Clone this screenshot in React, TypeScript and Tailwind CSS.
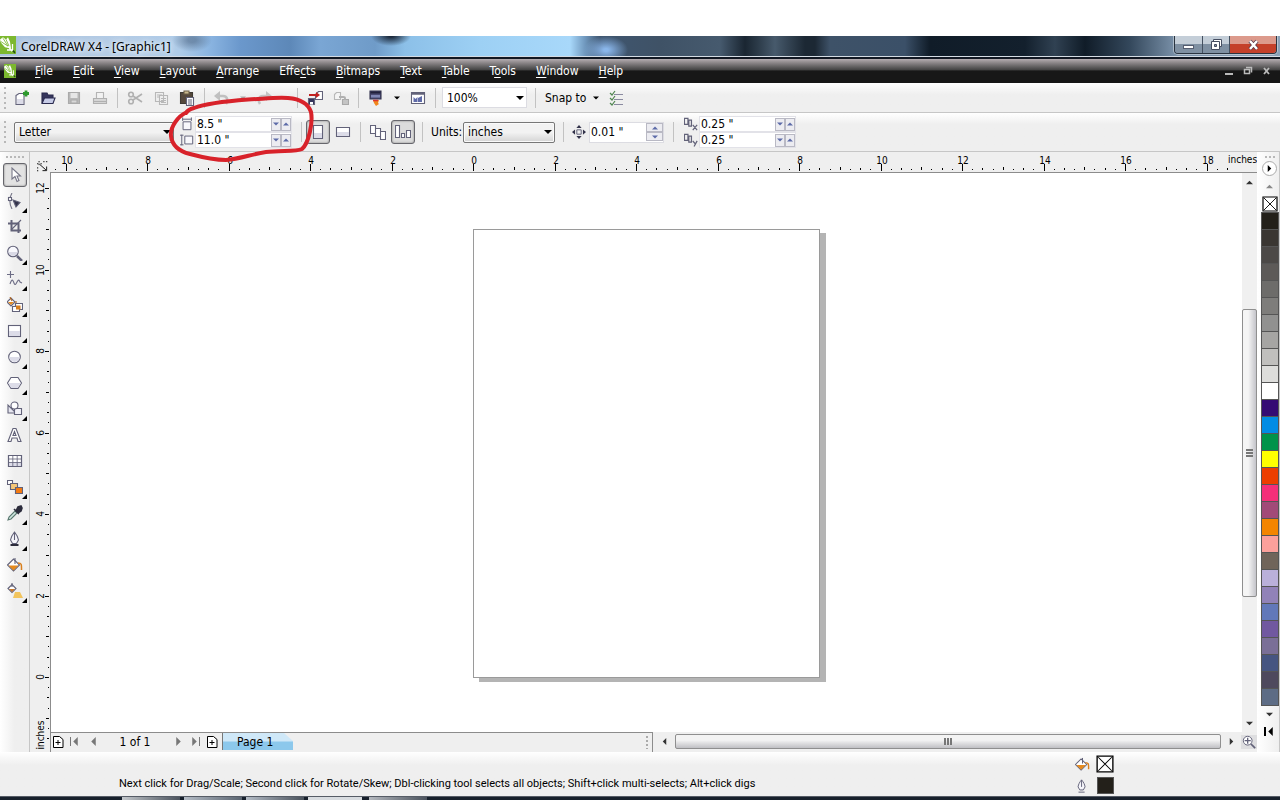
import React from "react";

const UNIT = 40.75;

function Arrow({ dir = "down", size = 7, color = "#000" }: { dir?: "up" | "down" | "left" | "right"; size?: number; color?: string }) {
  const paths = { down: "M0 2h8L4 6z", up: "M0 6h8L4 2z", left: "M6 0v8L2 4z", right: "M2 0v8l4-4z" };
  return (
    <svg width={size} height={size} viewBox="0 0 8 8" aria-hidden="true" className="pointer-events-none shrink-0">
      <path d={paths[dir]} fill={color} />
    </svg>
  );
}

function Icon({ children, size = 16 }: { children: React.ReactNode; size?: number }) {
  return (
    <svg width={size} height={size} viewBox="0 0 16 16" fill="none" stroke="#626279" strokeWidth="1.1" aria-hidden="true" className="shrink-0">
      {children}
    </svg>
  );
}

function Grip() {
  return <div className="h-6 w-[9px] shrink-0 bg-[radial-gradient(circle_at_5px_2px,#b8b8b8_1px,transparent_1px)] bg-[length:9px_5px]" />;
}

function Sep() {
  return (
    <div className="flex h-5 w-[9px] shrink-0 justify-center">
      <div className="w-px bg-[#c2c2c2]" />
    </div>
  );
}

function ToolButton({ label, children, wide = true }: { label: string; children: React.ReactNode; wide?: boolean }) {
  return (
    <button aria-label={label} className={`flex h-6 shrink-0 items-center justify-center ${wide ? "w-[26px]" : "w-4"}`}>
      {children}
    </button>
  );
}

function Select({ label, value, className, plain }: { label: string; value: string; className: string; plain?: boolean }) {
  return (
    <div className={`relative flex items-center ${className}`}>
      <select
        aria-label={label}
        defaultValue={value}
        className={`h-full w-full appearance-none pl-1 pr-5 text-xs text-black ${
          plain ? "border border-[#dcdce2] bg-white" : "rounded-[2px] border border-[#777] bg-linear-to-b from-[#f2f2f2] from-50% to-[#d4d4d4] shadow-[inset_0_0_0_1px_#fafafa]"
        }`}
      >
        <option>{value}</option>
      </select>
      <span className="pointer-events-none absolute right-[3px]">
        <Arrow size={8} />
      </span>
    </div>
  );
}

function SpinButton({ dir, label, className }: { dir: "up" | "down"; label: string; className: string }) {
  return (
    <button aria-label={label} className={`flex items-center justify-center border border-[#b9b9c4] bg-[#ececf1] ${className}`}>
      <Arrow dir={dir} size={6} color="#5c6aa8" />
    </button>
  );
}

function PairField({ label, value }: { label: string; value: string }) {
  return (
    <div className="flex h-4 w-[97px] items-center border border-[#e2e2e8] bg-white">
      <input aria-label={label} defaultValue={value} className="h-full min-w-0 flex-1 bg-transparent pl-px text-xs leading-none text-black" />
      <SpinButton dir="down" label={`Decrease ${label}`} className="h-[13px] w-[10px]" />
      <SpinButton dir="up" label={`Increase ${label}`} className="h-[13px] w-[10px]" />
    </div>
  );
}

function CorelMark({ width, height }: { width: number; height: number }) {
  return (
    <svg width={width} height={height} viewBox="0 0 16 16" preserveAspectRatio="none" aria-hidden="true" className="shrink-0">
      <rect width="16" height="16" fill="#7cb82f" />
      <path d="M0 3l3-2 3 2 2-2 2 4 1 6-6-1-4-4z" fill="#fff" />
      <path d="M3 2l5 7M6 3l3 6M1 5l7 4" stroke="#7cb82f" strokeWidth=".8" />
      <path d="M9 10l3 3.500M12.500 7v5.500H7" stroke="#fff" strokeWidth="1.300" fill="none" />
      <path d="M13 13l2 2" stroke="#234d12" strokeWidth="1.500" />
    </svg>
  );
}

const menus: [string, string, string][] = [
  ["", "F", "ile"],
  ["", "E", "dit"],
  ["", "V", "iew"],
  ["", "L", "ayout"],
  ["", "A", "rrange"],
  ["Effe", "c", "ts"],
  ["", "B", "itmaps"],
  ["", "T", "ext"],
  ["", "T", "able"],
  ["T", "o", "ols"],
  ["", "W", "indow"],
  ["", "H", "elp"],
];

function tickLength(q: number) {
  if (q % 8 === 0) return 7;
  if (q % 4 === 0) return 3;
  return q % 2 === 0 ? 2 : 1;
}

function HorizontalRuler() {
  const ticks = Array.from({ length: 118 }, (_, i) => i - 41);
  return (
    <svg height="20" className="block w-full" aria-hidden="true">
      {ticks.map((q) => {
        const x = Math.round(423 + (q * UNIT) / 4);
        const n = tickLength(q);
        return (
          <g key={q}>
            <rect x={x} y={n === 7 ? 12 : 18 - n} width="1" height={n} fill="#000" />
            {n === 7 && (
              <text x={x + 1} y="12" textAnchor="middle" className="text-[10px]">
                {Math.abs(q / 4)}
              </text>
            )}
          </g>
        );
      })}
    </svg>
  );
}

function VerticalRuler() {
  const ticks = Array.from({ length: 55 }, (_, i) => i - 6);
  return (
    <svg width="20" height="100%" className="block" aria-hidden="true">
      {ticks.map((q) => {
        const y = Math.round(505 - (q * UNIT) / 4);
        const n = tickLength(q) === 7 ? 5 : tickLength(q);
        return (
          <g key={q}>
            <rect x={n === 5 ? 15 : 19 - n} y={y} width={n === 5 ? 4 : n} height="1" fill="#000" />
            {n === 5 && (
              <text transform={`translate(14 ${y}) rotate(-90)`} textAnchor="middle" className="text-[10px]">
                {q / 4}
              </text>
            )}
          </g>
        );
      })}
      <text transform="translate(14 563) rotate(-90)" textAnchor="middle" className="text-[10px]">
        inches
      </text>
    </svg>
  );
}

const tools: { label: string; flyout: boolean; art: React.ReactNode }[] = [
  { label: "Pick", flyout: false, art: <path d="M5 1v11l3-2.500 2 5 2-1-2-4.500h3.500z" fill="#fff" stroke="#777788" /> },
  {
    label: "Shape",
    flyout: true,
    art: (
      <>
        <path d="M5 0c-3 5-3 10 0 16" stroke="#777788" />
        <rect x="1.500" y="4.500" width="3" height="3" fill="#fff" />
        <path d="M6 7l7 2.500-4 4.500z" fill="#33334a" />
      </>
    ),
  },
  {
    label: "Crop",
    flyout: true,
    art: (
      <>
        <path d="M4.500 1v10.500H14M1 4.500h10.500V14" strokeWidth="2" />
        <path d="M14 1L4 11" />
      </>
    ),
  },
  {
    label: "Zoom",
    flyout: true,
    art: (
      <>
        <path d="M10 11l5 5" strokeWidth="2.500" />
        <circle cx="6" cy="6.500" r="5.300" fill="#f8f8fd" />
        <path d="M1.500 7h9c-1 5-8 5-9 0z" fill="#d9d9e6" stroke="none" />
      </>
    ),
  },
  { label: "Freehand", flyout: true, art: <path d="M3.500 0v7M0 3.500h7M3 13c2-6 3-4 4-1s2 1 3-1 2-3 3 0l2 1" stroke="#6d6d86" /> },
  {
    label: "Smart fill",
    flyout: true,
    art: (
      <>
        <path d="M0 5l4-4 4 4-4 4z" fill="#fff" />
        <path d="M1 5h6L4 8z" fill="#e48a22" stroke="none" />
        <path d="M3 0l2 4M9 4v6" stroke="#b5661b" />
        <path d="M8.500 6.500h7v6h-7z" fill="#fff" />
        <path d="M5.500 9.500h7v5h-7z" fill="#fff" />
        <path d="M9 8.500h4.500v4H9z" fill="#d97f1c" stroke="none" />
      </>
    ),
  },
  {
    label: "Rectangle",
    flyout: true,
    art: (
      <>
        <rect x="1.500" y="2.500" width="12" height="11" fill="#fff" />
        <path d="M2 8h11v5H2z" fill="#dcdce8" stroke="none" />
      </>
    ),
  },
  {
    label: "Ellipse",
    flyout: true,
    art: (
      <>
        <circle cx="7.500" cy="8" r="5.800" fill="#fff" />
        <path d="M2.300 8h10.400c-.5 6.500-9.900 6.500-10.400 0z" fill="#dcdce8" stroke="none" />
      </>
    ),
  },
  {
    label: "Polygon",
    flyout: true,
    art: (
      <>
        <path d="M4 2.500h7L14.500 8 11 13.500H4L.5 8z" fill="#fff" />
        <path d="M1.200 8h12.600l-3 5H4.200z" fill="#dcdce8" stroke="none" />
      </>
    ),
  },
  {
    label: "Basic shapes",
    flyout: true,
    art: (
      <>
        <path d="M1 4v8h8z" fill="#e6e6f0" />
        <path d="M7.500 7.500h7v6h-7z" fill="#f2f2f8" />
        <circle cx="7.500" cy="4.500" r="3.500" fill="#fff" />
      </>
    ),
  },
  { label: "Text", flyout: false, art: <path d="M1 14.500L6 1.500h3l5 13h-3l-1-3.500H5l-1 3.500zM6 8.500h3L7.500 4.500z" fill="#fff" fillRule="evenodd" /> },
  {
    label: "Table",
    flyout: false,
    art: (
      <>
        <path d="M1.500 2.500h13v11h-13z" fill="#fff" />
        <path d="M2 9h12v4H2z" fill="#dcdce8" stroke="none" />
        <path d="M1.500 2.500h13v11h-13z" />
        <path d="M1 6h13M1 9.500h13M5.800 2.500v11M10.200 2.500v11" strokeWidth=".8" />
      </>
    ),
  },
  {
    label: "Blend",
    flyout: true,
    art: (
      <>
        <path d="M.5 1.500h5v4h-5z" fill="#fff" />
        <path d="M3.500 4.500h7v6h-7z" fill="#f6c878" />
        <path d="M8.500 8.500h7v6h-7z" fill="#f47a10" />
      </>
    ),
  },
  {
    label: "Eyedropper",
    flyout: true,
    art: (
      <>
        <path d="M1 15l1-3 6-6 2 2-6 6z" fill="#cfe6df" stroke="#58776f" />
        <path d="M7 4l5 5M9 6l2-4 3-1 1 2-1 3-3 2z" fill="#2c2c3c" stroke="#2c2c3c" strokeWidth="1.600" />
      </>
    ),
  },
  {
    label: "Outline",
    flyout: true,
    art: (
      <>
        <path d="M7.500 1C5 4 4 6 3.500 9l2 3.500h4l2-3.500C11 6 10 4 7.500 1zM7.500 1v8" fill="#f6f6fb" />
        <path d="M3.500 14h8" strokeWidth="2" stroke="#2c2c3c" />
      </>
    ),
  },
  {
    label: "Fill",
    flyout: true,
    art: (
      <>
        <path d="M.5 8l6-6 6 6-6 6z" fill="#fff" />
        <path d="M1.500 8.500h10l-5 5z" fill="#e58a1e" stroke="none" />
        <path d="M8 7V1" />
        <path d="M11 6c4 0 3.500 2 3.500 7" stroke="#d97f1c" strokeWidth="1.500" />
      </>
    ),
  },
  {
    label: "Interactive fill",
    flyout: true,
    art: (
      <>
        <path d="M1 5.500l4-4 4 4-4 4z" fill="#fff" />
        <path d="M2 6h6L5 9z" fill="#c87a2c" stroke="none" />
        <path d="M5 0v4" />
        <path d="M8 9h5l3 6H6z" fill="#f2c45c" stroke="none" />
      </>
    ),
  },
];

const swatches = [
  "#23201a", "#3a3632", "#4c4947", "#5d5a58", "#6d6c6a", "#7e7d7b", "#919190", "#a6a5a3", "#c0bfbd", "#dddddb", "#ffffff",
  "#350b74", "#018ce4", "#00934a", "#ffff00", "#ec3e00", "#f42f79", "#a24a78", "#f38500", "#fba09b", "#70645a", "#bab0da",
  "#9182b8", "#6278b9", "#7158a0", "#7a6f97", "#465581", "#4e495d", "#5d6c85",
];

function NoColor({ size }: { size: number }) {
  return (
    <svg width={size} height={size} viewBox="0 0 16 16" aria-hidden="true" className="shrink-0">
      <path d="M1 1h14v14H1z" fill="#fff" stroke="#000" strokeWidth="1.200" />
      <path d="M2 2l12 12M14 2L2 14" stroke="#000" strokeWidth=".9" />
    </svg>
  );
}

function AddPage() {
  return (
    <svg width="11" height="12" viewBox="0 0 11 12" aria-hidden="true">
      <path d="M.5.5h6l3.500 3v8H.5zM2.500 6.500h5M5 4v5" fill="#fff" stroke="#000" />
    </svg>
  );
}

export default function App() {
  return (
    <div className="relative flex h-screen min-h-[640px] flex-col overflow-hidden bg-white pt-9 font-['DejaVu_Sans_Condensed','Noto_Sans',sans-serif] text-xs text-black">
      <header className="flex h-[23px] shrink-0 items-start border-b-2 border-[#111722] bg-[radial-gradient(ellipse_20px_12px_at_192px_4px,#4f688699_20%,transparent),radial-gradient(ellipse_20px_10px_at_391px_0px,#1c2a3c_10%,transparent),radial-gradient(ellipse_22px_14px_at_606px_14px,#8ab6ea_10%,transparent),linear-gradient(90deg,#a9c2de_0px,#b4cce6_120px,#aecbe8_180px,#8cb6e2_208px,#6b98cc_240px,#5d88b8_290px,#7aa6d4_320px,#6f9bc8_375px,#8cc0e8_405px,#9dd0f4_480px,#a8d8fa_570px,#7098be_585px,#3f5670_600px,#3f5266_660px,#465a6e_720px,#1a2632_745px,#2c3b49_758px,#475a6c_775px,#1c2834_805px,#1c2834_815px,#3e5268_830px,#3b5068_905px,#101c28_930px,#13202d_1025px,#304152_1055px,#101c28_1085px,#34485c_1130px,#7990a8_1175px,#8ca2b8_100%)] shadow-[inset_0_-1px_0_#d4dce4]">
        <CorelMark width={16} height={18} />
        <h1 className="pl-[5px] pt-px font-['Noto_Sans',sans-serif] text-xs leading-[20px] [text-shadow:0_0_5px_#fff,0_0_8px_#fff]">CorelDRAW X4 - [Graphic1]</h1>
        <div className="ml-auto mr-[3px] flex h-[18px] overflow-hidden rounded-b-[4px] border border-t-0 border-[#2a3440] shadow-[0_0_0_1px_#ffffff66]">
          <button aria-label="Minimize" className="flex w-7 items-center justify-center border-r border-[#445060] bg-linear-to-b from-[#c4ced8] from-45% to-[#7f90a2] to-50%">
            <svg width="12" height="12" aria-hidden="true"><rect x=".5" y="6.500" width="10" height="3" fill="#fff" stroke="#555d70" /></svg>
          </button>
          <button aria-label="Restore" className="flex w-[27px] items-center justify-center border-r border-[#445060] bg-linear-to-b from-[#c4ced8] from-45% to-[#7f90a2] to-50%">
            <svg width="13" height="13" aria-hidden="true"><path d="M3.500 1.500h8v7h-8z" fill="#fff" stroke="#454d60" /><path d="M1.500 3.500h8v8h-8z" fill="#fff" stroke="#454d60" /><path d="M4.500 6.500h2v2h-2z" fill="#8994a6" stroke="#454d60" /></svg>
          </button>
          <button aria-label="Close" className="flex w-[46px] items-center justify-center bg-linear-to-b from-[#dc9a8c] from-45% to-[#c4402a] to-50%">
            <svg width="13" height="12" aria-hidden="true"><path d="M3 2l7 8M10 2l-7 8" stroke="#54384a" strokeWidth="4" /><path d="M3 2l7 8M10 2l-7 8" stroke="#fff" strokeWidth="2.500" /></svg>
          </button>
        </div>
      </header>

      <nav aria-label="Main menu" className="flex h-6 shrink-0 items-center bg-linear-to-b from-[#b5adb1] via-[#444] via-45% to-[#171717] to-50% text-white">
        <div className="flex w-[25px] shrink-0 pl-1"><CorelMark width={12} height={14} /></div>
        {menus.map(([before, key, after]) => (
          <button key={before + key + after} className="px-[10px] leading-5">
            {before}
            <span className="underline underline-offset-2">{key}</span>
            {after}
          </button>
        ))}
        <div className="ml-auto flex items-center gap-[9px] pr-2">
          <button aria-label="Minimize document"><svg width="10" height="10" aria-hidden="true"><path d="M1 8h8" stroke="#bbb" strokeWidth="2" /></svg></button>
          <button aria-label="Restore document"><svg width="10" height="10" aria-hidden="true"><path d="M3 1.500h5.500v5M1.500 3.500h5v4h-5z" stroke="#bbb" strokeWidth="1.500" fill="none" /></svg></button>
          <button aria-label="Close document"><svg width="10" height="10" aria-hidden="true"><path d="M2 2l5 6M7 2L2 8" stroke="#bbb" strokeWidth="1.800" /></svg></button>
        </div>
      </nav>

      <div className="flex h-[30px] shrink-0 items-center border-b border-[#c6c6c6] bg-linear-to-b from-white to-[#efefef] to-40%">
        <Grip />
        <ToolButton label="New"><Icon><path d="M2 5.500l3-2h5v11H2z" fill="#fff" /><path d="M3 9h6v5H3z" fill="#dcdce8" stroke="none" /><path d="M12 .5v6M9 3.500h6" stroke="#2f9a2f" strokeWidth="2.800" /></Icon></ToolButton>
        <ToolButton label="Open"><Icon><path d="M2 13V3h5l1 2h5v3" fill="#35355c" stroke="#2a2a4e" /><path d="M2 13.500L4.500 8H15l-2 5.500z" fill="#c6cbe6" stroke="#2a2a4e" /></Icon></ToolButton>
        <ToolButton label="Save"><Icon><path d="M2.500 2.500h11v11h-11z" fill="#b8b8b8" stroke="#aaa" /><path d="M4.500 3h7v5h-7z" fill="#e6e6e6" stroke="none" /><path d="M5 10h6v3H5z" fill="#d8d8d8" stroke="#aaa" /></Icon></ToolButton>
        <ToolButton label="Print"><Icon><path d="M4.500 8V2.500h7V8" fill="#f2f2f2" stroke="#b4b4b4" /><path d="M1.500 8.500h13v5h-13z" fill="#d8d8d8" stroke="#b0b0b0" /><path d="M2 11.500h12" stroke="#b0b0b0" /></Icon></ToolButton>
        <Sep />
        <ToolButton label="Cut"><Icon><path d="M6 6l9 6M6 10l9-6" stroke="#b0b0b0" strokeWidth="1.600" /><circle cx="4" cy="4.500" r="2.300" stroke="#b0b0b0" strokeWidth="1.600" /><circle cx="4" cy="11.500" r="2.300" stroke="#b0b0b0" strokeWidth="1.600" /></Icon></ToolButton>
        <ToolButton label="Copy"><Icon><path d="M2.500 2.500h8v9h-8zM6.500 5.500h8v9h-8zM8 8.500h5M8 10.500h5M8 12.500h5M4 5h5M4 7h2" fill="#efefef" stroke="#b8b8b8" /></Icon></ToolButton>
        <ToolButton label="Paste"><Icon><path d="M1.500 2.500h12v11h-12z" fill="#54483c" stroke="#3e3a34" /><path d="M5 1h5v3H5z" fill="#c9b98f" stroke="#6c5f45" /><path d="M7.500 7.500h7v8h-7z" fill="#fff" /><path d="M9 10h4M9 12h4M9 14h4" /></Icon></ToolButton>
        <Sep />
        <ToolButton label="Undo"><Icon><path d="M2 6h7c5 0 5 5 3 8" stroke="#c0c0c0" strokeWidth="2.500" /><path d="M6 1v10L0 6z" fill="#c0c0c0" stroke="none" /></Icon></ToolButton>
        <ToolButton label="Undo list" wide={false}><Arrow size={6} color="#aaa" /></ToolButton>
        <ToolButton label="Redo"><Icon><path d="M14 6H7c-5 0-5 5-3 8" stroke="#c4c4c4" strokeWidth="2.500" /><path d="M10 1v10l6-5z" fill="#c4c4c4" stroke="none" /></Icon></ToolButton>
        <ToolButton label="Redo list" wide={false}><Arrow size={6} color="#bbb" /></ToolButton>
        <Sep />
        <ToolButton label="Import"><Icon><path d="M8.500 4.500l3-3h4v8h-7z" fill="#fff" /><path d="M1.500 8.500h6v6h-6z" fill="#35355c" /><path d="M3 12h3v2.500H3z" fill="#fff" stroke="none" /><path d="M2 5h8" stroke="#c02020" strokeWidth="2" /><path d="M9 2l4 3-4 3z" fill="#c02020" stroke="none" /></Icon></ToolButton>
        <ToolButton label="Export"><Icon><path d="M1.500 4.500l2-2h4v7h-6z" fill="#f4f4f4" stroke="#b8b8b8" /><path d="M9.500 9.500h6v5h-6z" fill="#c4c4c4" stroke="#a8a8a8" /><path d="M6 7h4c2 0 2 0 2 3" stroke="#b0b0b0" strokeWidth="2" /></Icon></ToolButton>
        <Sep />
        <ToolButton label="Application launcher"><Icon><path d="M2 1h11v8H2z" fill="#4a4a72" stroke="#33334e" /><path d="M2.500 1.500h10v2h-10z" fill="#22223c" stroke="none" /><path d="M3 5h9v2.500H3z" fill="#7f86b4" stroke="none" /><path d="M5 10h6l-1 3 1 1-3 2-2-3z" fill="#f0861c" stroke="none" /><path d="M5 10.500h5" stroke="#d33" strokeWidth="1.500" /></Icon></ToolButton>
        <ToolButton label="Launcher list" wide={false}><Arrow size={6} /></ToolButton>
        <ToolButton label="Welcome screen"><Icon><path d="M1.500 2.500h13v11h-13z" fill="#fff" /><path d="M1.500 3.500h13" strokeWidth="2.500" /><path d="M3.500 7l2 2 2-2v5h-4zM8 8l4-2v6H8z" fill="#5f6aa8" stroke="none" /></Icon></ToolButton>
        <Sep />
        <Select label="Zoom level" value="100%" plain className="ml-[2px] mr-1 h-[21px] w-[85px]" />
        <Sep />
        <button className="mr-[5px] flex items-center gap-[7px] pl-[5px]">Snap to <Arrow size={6} /></button>
        <ToolButton label="Options"><Icon><path d="M1 3l2 2 3-4M1 8l2 2 3-4M1 13l2 2 3-4" stroke="#4f864f" strokeWidth="1.200" /><path d="M5 4.500h9M5 9.500h9M5 14.500h9" stroke="#8a8aa0" /></Icon></ToolButton>
      </div>

      <div className="flex h-[39px] shrink-0 items-center border-b border-[#c6c6c6] bg-linear-to-b from-white to-[#efefef] to-30%">
        <Grip />
        <Select label="Paper type" value="Letter" className="ml-[5px] mr-[6px] h-[21px] w-[160px]" />
        <div className="mr-px flex flex-col gap-[2px]">
          <Icon size={14}><path d="M3.500 5.500h9v9h-9zM3 2.500h10M3 .5v4M13 .5v4" fill="#f8f8fc" /></Icon>
          <Icon size={14}><path d="M5.500 3.500h9v9h-9zM2 2v12M0 2.500h4M0 13.500h4" fill="#f8f8fc" /></Icon>
        </div>
        <div className="flex flex-col">
          <PairField label="Paper width" value={'8.5 "'} />
          <PairField label="Paper height" value={'11.0 "'} />
        </div>
        <div className="pl-[5px]"><Sep /></div>
        <button aria-label="Portrait" aria-pressed="true" className="flex h-6 w-6 items-center justify-center rounded-[3px] border border-[#66666c] bg-[#dcdcdc] shadow-[inset_0_0_2px_#777]"><Icon><path d="M3.500 1.500h9v13h-9z" fill="#fff" /><path d="M4 9h8v5H4z" fill="#dcdce8" stroke="none" /></Icon></button>
        <ToolButton label="Landscape"><Icon><path d="M1.500 3.500h13v9h-13z" fill="#fff" /><path d="M2 8h12v4H2z" fill="#dcdce8" stroke="none" /></Icon></ToolButton>
        <Sep />
        <ToolButton label="All pages"><Icon><path d="M.5 1.500h5v8h-5zM5.500 4.500h5v8h-5zM10.500 7.500h5v8h-5z" fill="#fff" /></Icon></ToolButton>
        <button aria-label="Current page" aria-pressed="true" className="flex h-6 w-6 items-center justify-center rounded-[3px] border border-[#66666c] bg-[#dcdcdc] shadow-[inset_0_0_2px_#777]"><Icon><path d="M.5 1.500h4v12h-4zM6.500 9.500h3v4h-3zM11.500 6.500h4v7h-4z" fill="#fff" /></Icon></button>
        <div className="pl-[3px]"><Sep /></div>
        <span className="w-[36px] whitespace-nowrap pl-1">Units:</span>
        <Select label="Units" value="inches" className="mr-1 h-[21px] w-[92px]" />
        <Sep />
        <div className="flex w-[21px] justify-center"><Icon size={14}><path d="M5.500 5.500h5v5h-5z" /><path d="M8 0l3 3.500H5zM8 16l3-3.500H5zM0 8l3.500-3v6zM16 8l-3.500-3v6z" fill="#33334a" stroke="none" /></Icon></div>
        <div className="flex h-[21px] w-[75px] items-center border border-[#dcdce2] bg-white">
          <input aria-label="Nudge offset" defaultValue={'0.01 "'} className="h-full min-w-0 flex-1 bg-transparent pl-px text-xs text-black" />
          <div className="flex flex-col">
            <SpinButton dir="up" label="Increase nudge offset" className="h-[9px] w-[17px]" />
            <SpinButton dir="down" label="Decrease nudge offset" className="h-[9px] w-[17px]" />
          </div>
        </div>
        <div className="pl-[5px] pr-[6px]"><Sep /></div>
        <div className="mr-px flex flex-col gap-[2px]">
          <Icon size={14}><path d="M.5 1.500h4v7h-4zM5.500 3.500h3v7h-3zM10 9l5 6M15 9l-5 6" strokeWidth="1.400" /></Icon>
          <Icon size={14}><path d="M.5 1.500h4v7h-4zM5.500 3.500h3v7h-3zM10 9l2.500 3M15 9l-3.500 6.500" strokeWidth="1.400" /></Icon>
        </div>
        <div className="flex flex-col">
          <PairField label="Duplicate distance X" value={'0.25 "'} />
          <PairField label="Duplicate distance Y" value={'0.25 "'} />
        </div>
      </div>

      <main className="flex min-h-0 flex-1">
        <aside aria-label="Toolbox" className="flex w-[30px] shrink-0 flex-col items-center border-r border-[#c6c6c6] bg-linear-to-r from-white to-[#efefef] to-50%">
          <div className="h-[11px] w-5 shrink-0 bg-[radial-gradient(circle_at_2px_5px,#b8b8b8_1px,transparent_1px)] bg-[length:4px_11px]" />
          {tools.map((tool) => (
            <button
              key={tool.label}
              aria-label={tool.label}
              className={`relative mb-[2px] flex h-6 w-6 shrink-0 items-center justify-center ${tool.label === "Pick" ? "rounded-[3px] border border-[#66666c] bg-[#e2e2e2] shadow-[inset_0_0_2px_#777]" : ""}`}
            >
              <Icon>{tool.art}</Icon>
              {tool.flyout && (
                <svg width="5" height="5" aria-hidden="true" className="absolute bottom-0 right-0"><path d="M5 0v5H0z" fill="#000" /></svg>
              )}
            </button>
          ))}
        </aside>

        <section className="flex min-w-0 flex-1 flex-col bg-[#efefef]">
          <div className="flex h-[20px] shrink-0">
            <div className="flex w-[20px] shrink-0 items-center justify-center pl-1 pt-2">
              <Icon size={11}><path d="M3 0v2M3 4v2M0 4h2M5 4h2M9 1h2M13 1h2M1 9v2M1 13v2" stroke="#000" strokeWidth="1.300" /><path d="M4 5l9 8M14 8v6H8" stroke="#000" strokeWidth="1.300" /></Icon>
            </div>
            <div className="flex min-w-0 flex-1">
              <div className="min-w-0 flex-1"><HorizontalRuler /></div>
              <div className="w-[29px] shrink-0 text-[10px] leading-4">inches</div>
            </div>
          </div>
          <div className="flex min-h-0 flex-1">
            <div className="w-[20px] shrink-0 overflow-hidden"><VerticalRuler /></div>
            <div className="flex min-w-0 flex-1 flex-col border-l border-t border-[#8c8c8c]">
              <div className="flex min-h-0 flex-1">
                <div className="relative min-w-0 flex-1 overflow-hidden bg-white">
                  <div className="absolute left-[422px] top-[56px] h-[449px] w-[347px] border border-[#9a9a9a] bg-white shadow-[6px_4px_0_#b4b4b4]" />
                </div>
                <div className="flex w-[15px] shrink-0 flex-col items-center bg-[#f0f0f0]">
                  <button aria-label="Scroll up" className="flex h-[18px] items-center"><Arrow dir="up" size={7} color="#333" /></button>
                  <div className="flex min-h-0 w-full flex-1 flex-col">
                    <div className="grow-[118] basis-0" />
                    <div className="flex w-full grow-[288] basis-0 flex-col items-center justify-center gap-px rounded-[2px] border border-[#8f8f8f] bg-linear-to-r from-[#f5f5f5] from-40% to-[#c4c4ca]">
                      <div className="h-[2px] w-[7px] bg-[#777]" />
                      <div className="h-[2px] w-[7px] bg-[#777]" />
                      <div className="h-[2px] w-[7px] bg-[#777]" />
                    </div>
                    <div className="grow-[117] basis-0" />
                  </div>
                  <button aria-label="Scroll down" className="flex h-[18px] items-center"><Arrow dir="down" size={7} color="#333" /></button>
                </div>
              </div>
              <div className="flex h-5 shrink-0 items-stretch">
                <div className="flex w-[602px] shrink-0 items-center border-r border-t border-[#8c8c8c] pb-[2px]">
                  <button aria-label="Add page before" className="flex w-[15px] justify-center"><AddPage /></button>
                  <button aria-label="First page" className="flex w-[18px] items-center justify-center"><span className="h-[9px] w-px bg-[#777]" /><Arrow dir="left" size={9} color="#777" /></button>
                  <button aria-label="Previous page" className="flex w-[18px] justify-center"><Arrow dir="left" size={9} color="#777" /></button>
                  <span className="w-[66px] text-center">1 of 1</span>
                  <button aria-label="Next page" className="flex w-5 justify-center"><Arrow dir="right" size={9} color="#777" /></button>
                  <button aria-label="Last page" className="flex w-[14px] items-center justify-center"><Arrow dir="right" size={9} color="#777" /><span className="h-[9px] w-px bg-[#777]" /></button>
                  <button aria-label="Add page after" className="flex w-5 justify-center"><AddPage /></button>
                  <button className="flex h-full w-[71px] items-center border-l border-[#777] bg-linear-to-b from-[#cfe8f8] from-45% to-[#8cc8ec] to-55% pl-[14px] [clip-path:polygon(0_0,62px_0,100%_8px,100%_100%,0_100%)]">Page 1</button>
                  <div className="ml-auto mr-[3px] h-[14px] w-[3px] bg-[radial-gradient(circle_at_1px_2px,#aaa_1px,transparent_1px)] bg-[length:3px_4px]" />
                </div>
                <div className="flex min-w-0 flex-1 items-center pb-px">
                  <button aria-label="Scroll left" className="flex w-[22px] justify-center"><Arrow dir="left" size={7} color="#333" /></button>
                  <div className="flex h-[15px] min-w-0 flex-1 items-center justify-center gap-px rounded-[2px] border border-[#8f8f8f] bg-linear-to-b from-[#f3f3f3] from-40% to-[#c0c0c4]">
                    <div className="h-[7px] w-[2px] bg-[#777]" />
                    <div className="h-[7px] w-[2px] bg-[#777]" />
                    <div className="h-[7px] w-[2px] bg-[#777]" />
                  </div>
                  <button aria-label="Scroll right" className="flex w-5 justify-center"><Arrow dir="right" size={7} color="#333" /></button>
                  <button aria-label="Navigator" className="flex w-4 justify-center bg-[#dedee0]"><Icon size={14}><path d="M10 10l5 5" strokeWidth="2" /><circle cx="6.500" cy="6.500" r="5" fill="#fff" /><path d="M6.500 3v7M3 6.500h7" strokeWidth="1.500" /></Icon></button>
                </div>
              </div>
            </div>
          </div>
        </section>

        <aside aria-label="Color palette" className="flex w-[23px] shrink-0 flex-col items-center border-r border-[#c6c6c6] bg-linear-to-r from-white to-[#efefef] pl-[3px]">
          <div className="h-[9px] w-3 shrink-0 bg-[radial-gradient(circle_at_2px_5px,#b8b8b8_1px,transparent_1px)] bg-[length:4px_9px]" />
          <button aria-label="Palette menu" className="flex h-[15px] w-[15px] shrink-0 items-center justify-center rounded-full border border-[#aaa] bg-white"><Arrow dir="right" size={7} /></button>
          <button aria-label="Scroll palette up" className="flex h-5 shrink-0 items-center"><Arrow dir="up" size={7} color="#888" /></button>
          <button aria-label="No color" className="flex h-4 shrink-0 items-start"><NoColor size={16} /></button>
          <div className="flex min-h-0 w-[18px] flex-col border-x border-t border-[#555]">
            {swatches.map((color) => (
              <button key={color} aria-label={`Color ${color}`} className="h-[17px] min-h-0 border-b border-[#555]" style={{ backgroundColor: color }} />
            ))}
          </div>
          <button aria-label="Scroll palette down" className="flex h-[17px] shrink-0 items-center"><Arrow dir="down" size={7} color="#333" /></button>
          <button aria-label="Expand palette" className="flex h-4 shrink-0 items-center"><span className="h-[9px] w-[2px] bg-black" /><Arrow dir="left" size={9} /></button>
        </aside>
      </main>

      <footer className="flex h-11 shrink-0 bg-linear-to-b from-white to-[#efefef] to-30%">
        <p className="mt-auto min-w-0 flex-1 truncate pb-1 pl-[119px] font-['Roboto',sans-serif] text-[11px] leading-4">
          Next click for Drag/Scale; Second click for Rotate/Skew; Dbl-clicking tool selects all objects; Shift+click multi-selects; Alt+click digs
        </p>
        <div className="mr-[165px] grid shrink-0 grid-cols-[18px_20px] items-center justify-items-center gap-x-1 pt-px">
          <Icon size={15}><path d="M.5 8l6-6 6 6-6 6z" fill="#fff" /><path d="M1.500 8.500h10l-5 5z" fill="#e58a1e" stroke="none" /><path d="M8 7V1" /><path d="M11 6c4 0 3.500 2 3.500 7" stroke="#d97f1c" strokeWidth="1.500" /></Icon>
          <NoColor size={18} />
          <Icon size={14}><path d="M7.500 1C5 4 4 6 3.500 9l2 3.500h4l2-3.500C11 6 10 4 7.500 1zM7.500 1v8M4 15h7" fill="#f6f6fb" /></Icon>
          <div className="h-[17px] w-[17px] border border-[#555] bg-[#23201a]" />
        </div>
      </footer>
      <div className="flex h-1 shrink-0 gap-1 border-t border-[#565c66] bg-[#17202c] pl-[122px]">
        <div className="w-[58px] bg-linear-to-r from-[#c4c8cc] to-[#4c545e]" />
        <div className="w-[58px] bg-linear-to-r from-[#b4bcc6] to-[#5c6672]" />
        <div className="w-[58px] bg-linear-to-r from-[#b4bcc6] to-[#4c545e]" />
        <div className="w-[54px] bg-[#d8dce0]" />
        <div className="ml-[3px] w-[58px] bg-linear-to-r from-[#b4b8be] to-[#4c545e]" />
      </div>

      <svg width="150" height="72" viewBox="165 92 150 72" fill="none" aria-hidden="true" className="pointer-events-none absolute left-[165px] top-[92px]">
        <path d="M187 112C178 116 170 127 171 136C172 145 178 151 190 154C205 158 215 160 226 160C240 159 252 154 266 152C280 150 296 152 302 149C309 143 313 122 311 112C308 103 300 99 288 98C276 97 262 99 248 99.500C228 101 207 103 194 108C190 109 187 111 186 113" stroke="#d8222a" strokeWidth="4" strokeLinecap="round" />
      </svg>
    </div>
  );
}
